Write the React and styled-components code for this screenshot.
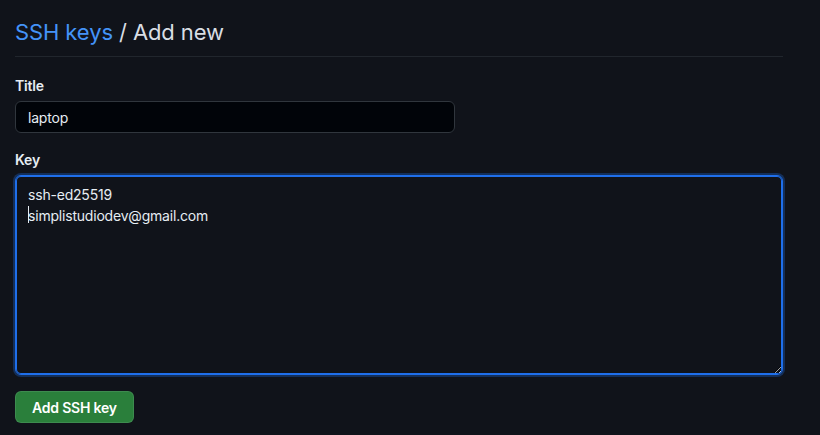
import React from "react";
import styled, { createGlobalStyle } from "styled-components";

const GlobalStyle = createGlobalStyle`
  html, body {
    margin: 0;
    background: #10131a;
    color: #e6edf3;
    font-family: "Inter", "Liberation Sans", sans-serif;
    font-size: 14px;
    letter-spacing: -0.2px;
  }
`;

const Page = styled.div`
  width: 768px;
  padding: 16px 0 0 15px;
`;

const Subhead = styled.div`
  border-bottom: 1px solid #21262d;
  padding-bottom: 8px;
  margin-bottom: 18px;
`;

const Heading = styled.h2`
  margin: 0;
  font-size: 22px;
  font-weight: 400;
  line-height: 32px;
  letter-spacing: -0.1px;
  color: #d9dee4;

  & a {
    color: #4493f8;
    text-decoration: none;
  }
`;

const FormGroup = styled.div`
  display: flex;
  flex-direction: column;
  margin-bottom: 16px;
`;

const Label = styled.label`
  font-weight: 600;
  font-size: 14px;
  line-height: 21px;
  margin-bottom: 5px;
`;

const Input = styled.input`
  box-sizing: border-box;
  width: 440px;
  height: 32px;
  padding: 0 12px;
  background: #010409;
  border: 1px solid #30363d;
  border-radius: 6px;
  color: #e6edf3;
  font: inherit;
  font-size: 14px;
  letter-spacing: -0.2px;
  outline: none;
`;

const TextareaWrap = styled.div`
  position: relative;
  width: 768px;
`;

const Textarea = styled.textarea`
  display: block;
  box-sizing: border-box;
  width: 768px;
  height: 200px;
  padding: 8px 12px;
  background: #10131a;
  border: 1px solid #1f6feb;
  border-radius: 6px;
  box-shadow: inset 0 0 0 1px #1f6feb, 0 0 0 2px rgba(31, 111, 235, 0.3);
  color: #e6edf3;
  font: inherit;
  font-size: 14px;
  line-height: 21px;
  letter-spacing: -0.2px;
  outline: none;
  resize: vertical;
  color-scheme: dark;
`;

const Caret = styled.span`
  position: absolute;
  left: 13px;
  top: 31px;
  width: 1px;
  height: 17px;
  background: #e6edf3;
`;

const Button = styled.button`
  box-sizing: border-box;
  height: 32px;
  padding: 0 16px;
  background: #2a7f3b;
  border: 1px solid rgba(240, 246, 252, 0.1);
  border-radius: 6px;
  color: #ffffff;
  font: inherit;
  font-size: 14px;
  font-weight: 600;
  letter-spacing: -0.2px;
  cursor: pointer;
`;

export default function App() {
  return (
    <>
      <GlobalStyle />
      <Page>
        <Subhead>
          <Heading>
            <a href="#keys">SSH keys</a> / Add new
          </Heading>
        </Subhead>
        <FormGroup>
          <Label htmlFor="title">Title</Label>
          <Input id="title" defaultValue="laptop" />
        </FormGroup>
        <FormGroup>
          <Label htmlFor="key">Key</Label>
          <TextareaWrap>
            <Textarea
              id="key"
              defaultValue={"ssh-ed25519\nsimplistudiodev@gmail.com"}
              spellCheck={false}
            />
            <Caret />
          </TextareaWrap>
        </FormGroup>
        <Button>Add SSH key</Button>
      </Page>
    </>
  );
}
